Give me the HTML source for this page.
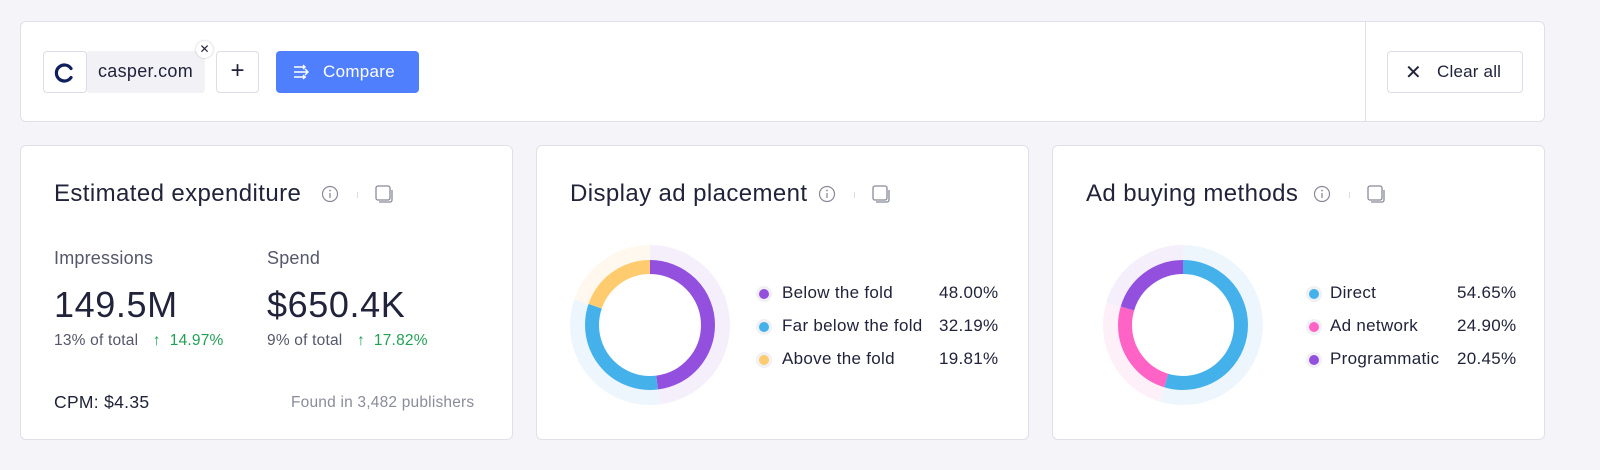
<!DOCTYPE html>
<html><head><meta charset="utf-8"><style>
*{box-sizing:border-box;margin:0;padding:0}
body{width:1600px;height:470px;background:#f4f4f9;font-family:"Liberation Sans",sans-serif;color:#21233a;position:relative;overflow:hidden}
.box{position:absolute;background:#fff;border:1px solid #dfe0ea;border-radius:6px}
.abs{position:absolute;white-space:nowrap}
.title{font-size:24px;letter-spacing:0.4px;color:#21233a}
.lbl{font-size:18px;letter-spacing:0.2px;color:#55576a}
.big{font-size:36px;letter-spacing:0.6px;color:#21233a}
.sm{font-size:15.5px;letter-spacing:0.2px;color:#55576a}
.g{color:#22a156}
.leg{font-size:17px;letter-spacing:0.3px;color:#21233a}
.dot{position:absolute;width:10px;height:10px;border-radius:50%;box-shadow:0 0 0 3px #f0f0f5}
</style></head><body>
<div class="box" style="left:20px;top:21px;width:1525px;height:101px"></div>
<div class="abs" style="left:1365px;top:22px;width:1px;height:99px;background:#dfe0ea"></div>
<div class="abs" style="left:86px;top:51px;width:119px;height:42px;background:#f1f1f6;border-radius:4px"></div>
<div class="abs" style="left:43px;top:51px;width:44px;height:42px;background:#fff;border:1px solid #dcdde6;border-radius:4px"></div>
<svg class="abs" style="left:52px;top:60px" width="26" height="26" viewBox="0 0 26 26"><path d="M19 8.5A8 8 0 1 0 19 17.5" fill="none" stroke="#10205e" stroke-width="3.2" stroke-linecap="round"/></svg>
<div class="abs" style="left:98px;top:61px;font-size:18px;letter-spacing:0.3px">casper.com</div>
<div class="abs" style="left:196px;top:41px;width:17px;height:17px;border-radius:50%;background:#fff;box-shadow:0 0 2px #bbb;font-size:12px;text-align:center;line-height:17px">✕</div>
<div class="abs" style="left:216px;top:51px;width:43px;height:42px;border:1px solid #dcdde6;border-radius:4px;font-size:24px;text-align:center;line-height:38px">+</div>
<div class="abs" style="left:276px;top:51px;width:143px;height:42px;background:#4f7ffd;border-radius:4px;color:#fff;font-size:17px;letter-spacing:0.3px;line-height:42px;padding-left:47px">Compare</div>
<svg class="abs" style="left:292px;top:62px" width="20" height="20" viewBox="0 0 20 20" fill="none" stroke="#fff" stroke-width="1.4"><path d="M2 5h10M2 10h14M2 15h12M13 7l3 3-3 3M11 3l2 2-2 2M11 13l2 2-2 2"/></svg>
<div class="abs" style="left:1387px;top:51px;width:136px;height:42px;border:1px solid #dcdde6;border-radius:4px;font-size:17px;letter-spacing:0.2px;line-height:40px;padding-left:49px">Clear all</div>
<div class="abs" style="left:1405px;top:60px;font-size:20px">✕</div>

<div class="box" style="left:20px;top:145px;width:493px;height:295px"></div>
<div class="box" style="left:536px;top:145px;width:493px;height:295px"></div>
<div class="box" style="left:1052px;top:145px;width:493px;height:295px"></div>

<div class="abs title" style="left:54px;top:180px">Estimated expenditure</div>
<div class="abs title" style="left:570px;top:180px">Display ad placement</div>
<div class="abs title" style="left:1086px;top:180px">Ad buying methods</div>
<svg width="0" height="0" style="position:absolute"><defs>
<g id="ic"><circle cx="9" cy="9" r="7.5" fill="none" stroke="#888a99" stroke-width="1.2"/><path d="M9 8v5" stroke="#888a99" stroke-width="1.3"/><circle cx="9" cy="5.5" r="0.9" fill="#888a99"/>
<rect x="36" y="7" width="1" height="6" fill="#ddd"/>
<rect x="55" y="1" width="14" height="14" rx="2" fill="none" stroke="#888a99" stroke-width="1.3"/><path d="M58 17h11a2 2 0 0 0 2-2V5" fill="none" stroke="#888a99" stroke-width="1.3"/></g></defs></svg>
<svg class="abs" style="left:321px;top:185px" width="80" height="20"><use href="#ic"/></svg>
<svg class="abs" style="left:818px;top:185px" width="80" height="20"><use href="#ic"/></svg>
<svg class="abs" style="left:1313px;top:185px" width="80" height="20"><use href="#ic"/></svg>

<div class="abs lbl" style="left:54px;top:248px">Impressions</div>
<div class="abs lbl" style="left:267px;top:248px">Spend</div>
<div class="abs big" style="left:54px;top:284px">149.5M</div>
<div class="abs big" style="left:267px;top:284px">$650.4K</div>
<div class="abs sm" style="left:54px;top:332px">13% of total <span class="g" style="margin-left:10px">↑ &nbsp;14.97%</span></div>
<div class="abs sm" style="left:267px;top:332px">9% of total <span class="g" style="margin-left:10px">↑ &nbsp;17.82%</span></div>
<div class="abs" style="left:54px;top:392px;font-size:17.5px;letter-spacing:0.3px">CPM: $4.35</div>
<div class="abs" style="left:291px;top:394px;font-size:15.5px;letter-spacing:0.2px;color:#8a8c9b">Found in 3,482 publishers</div>

<svg class="abs" style="left:570px;top:245px" width="160" height="160" viewBox="0 0 160 160">
<g transform="rotate(-90 80 80)" fill="none">
<circle cx="80" cy="80" r="72.5" stroke="#f5effc" stroke-width="15" stroke-dasharray="218.6 455.5"/>
<circle cx="80" cy="80" r="72.5" stroke="#eef6fd" stroke-width="15" stroke-dasharray="0 218.6 146.6 455.5"/>
<circle cx="80" cy="80" r="72.5" stroke="#fff8ee" stroke-width="15" stroke-dasharray="0 365.2 90.3 455.5"/>
<circle cx="80" cy="80" r="58" stroke="#9350de" stroke-width="14" stroke-dasharray="174.9 364.4"/>
<circle cx="80" cy="80" r="58" stroke="#45b1ea" stroke-width="14" stroke-dasharray="0 174.9 117.3 364.4"/>
<circle cx="80" cy="80" r="58" stroke="#fecb6e" stroke-width="14" stroke-dasharray="0 292.2 72.2 364.4"/>
</g></svg>
<div class="dot" style="left:759px;top:289px;background:#9350de"></div>
<div class="dot" style="left:759px;top:322px;background:#45b1ea"></div>
<div class="dot" style="left:759px;top:355px;background:#fecb6e"></div>
<div class="abs leg" style="left:782px;top:283px">Below the fold</div>
<div class="abs leg" style="left:782px;top:316px">Far below the fold</div>
<div class="abs leg" style="left:782px;top:349px">Above the fold</div>
<div class="abs leg" style="left:939px;top:283px">48.00%</div>
<div class="abs leg" style="left:939px;top:316px">32.19%</div>
<div class="abs leg" style="left:939px;top:349px">19.81%</div>

<svg class="abs" style="left:1103px;top:245px" width="160" height="160" viewBox="0 0 160 160">
<g transform="rotate(-90 80 80)" fill="none">
<circle cx="80" cy="80" r="72.5" stroke="#eef6fd" stroke-width="15" stroke-dasharray="248.9 455.5"/>
<circle cx="80" cy="80" r="72.5" stroke="#fdf0f9" stroke-width="15" stroke-dasharray="0 248.9 113.4 455.5"/>
<circle cx="80" cy="80" r="72.5" stroke="#f5effc" stroke-width="15" stroke-dasharray="0 362.3 93.2 455.5"/>
<circle cx="80" cy="80" r="58" stroke="#45b1ea" stroke-width="14" stroke-dasharray="199.1 364.4"/>
<circle cx="80" cy="80" r="58" stroke="#ff63c5" stroke-width="14" stroke-dasharray="0 199.1 90.7 364.4"/>
<circle cx="80" cy="80" r="58" stroke="#9350de" stroke-width="14" stroke-dasharray="0 289.8 74.6 364.4"/>
</g></svg>
<div class="dot" style="left:1309px;top:289px;background:#45b1ea"></div>
<div class="dot" style="left:1309px;top:322px;background:#ff63c5"></div>
<div class="dot" style="left:1309px;top:355px;background:#9350de"></div>
<div class="abs leg" style="left:1330px;top:283px">Direct</div>
<div class="abs leg" style="left:1330px;top:316px">Ad network</div>
<div class="abs leg" style="left:1330px;top:349px">Programmatic</div>
<div class="abs leg" style="left:1457px;top:283px">54.65%</div>
<div class="abs leg" style="left:1457px;top:316px">24.90%</div>
<div class="abs leg" style="left:1457px;top:349px">20.45%</div>
</body></html>
